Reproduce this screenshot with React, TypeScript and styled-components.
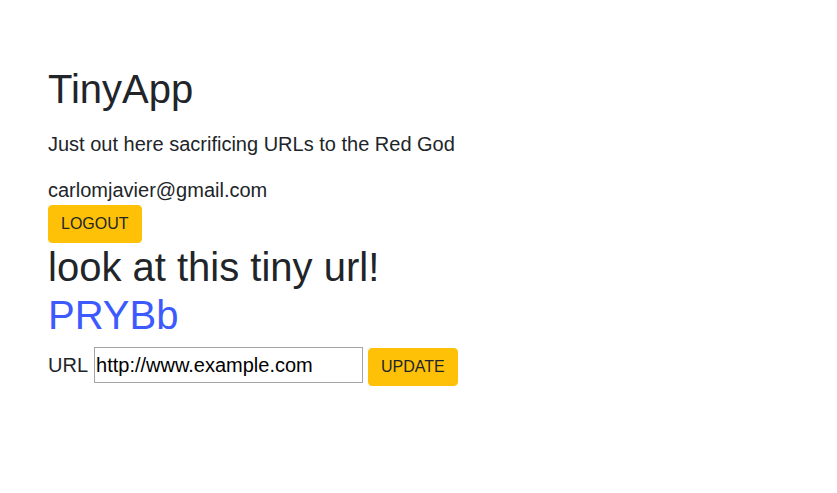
import React from "react";
import styled, { createGlobalStyle } from "styled-components";

const GlobalStyle = createGlobalStyle`
  html, body {
    margin: 0;
    padding: 0;
    background: #fff;
  }
  body {
    font-family: "Liberation Sans", Arial, sans-serif;
    color: #212529;
    font-size: 16px;
    line-height: 1.5;
  }
`;

const Page = styled.main`
  padding: 65px 48px 0;
`;

const Title = styled.h1`
  margin: 0 0 16px;
  font-size: 40px;
  line-height: 48px;
  font-weight: 400;
`;

const Lead = styled.p`
  margin: 0 0 16px;
  font-size: 20px;
  line-height: 30px;
`;

const Email = styled.div`
  font-size: 20px;
  line-height: 30px;
`;

const Button = styled.button`
  box-sizing: border-box;
  display: inline-block;
  font-family: inherit;
  font-size: 16px;
  line-height: 24px;
  padding: 6px 12px;
  border: 1px solid #ffc107;
  border-radius: 4px;
  background: #ffc107;
  color: #212529;
  cursor: pointer;
`;

const Heading = styled.h2`
  margin: 0;
  font-size: 40px;
  line-height: 48px;
  font-weight: 400;
`;

const ShortLink = styled.a`
  display: block;
  font-size: 40px;
  line-height: 48px;
  color: #3d5afe;
  text-decoration: none;
`;

const UrlForm = styled.form`
  display: flex;
  align-items: baseline;
  margin-top: 8px;
`;

const Label = styled.label`
  font-size: 20px;
  line-height: 30px;
  margin-right: 6px;
`;

const UrlInput = styled.input`
  box-sizing: border-box;
  width: 269px;
  height: 36px;
  padding: 1px 1px;
  font-family: "Liberation Sans", Arial, sans-serif;
  font-size: 20px;
  color: #000;
  border: 1px solid #a5a5a5;
  margin-right: 5px;
`;

export default function App() {
  return (
    <>
      <GlobalStyle />
      <Page>
        <Title>TinyApp</Title>
        <Lead>Just out here sacrificing URLs to the Red God</Lead>
        <Email>carlomjavier@gmail.com</Email>
        <Button type="button">LOGOUT</Button>
        <Heading>look at this tiny url!</Heading>
        <ShortLink href="#">PRYBb</ShortLink>
        <UrlForm onSubmit={(e) => e.preventDefault()}>
          <Label htmlFor="longURL">URL</Label>
          <UrlInput id="longURL" defaultValue="http://www.example.com" />
          <Button type="submit">UPDATE</Button>
        </UrlForm>
      </Page>
    </>
  );
}
